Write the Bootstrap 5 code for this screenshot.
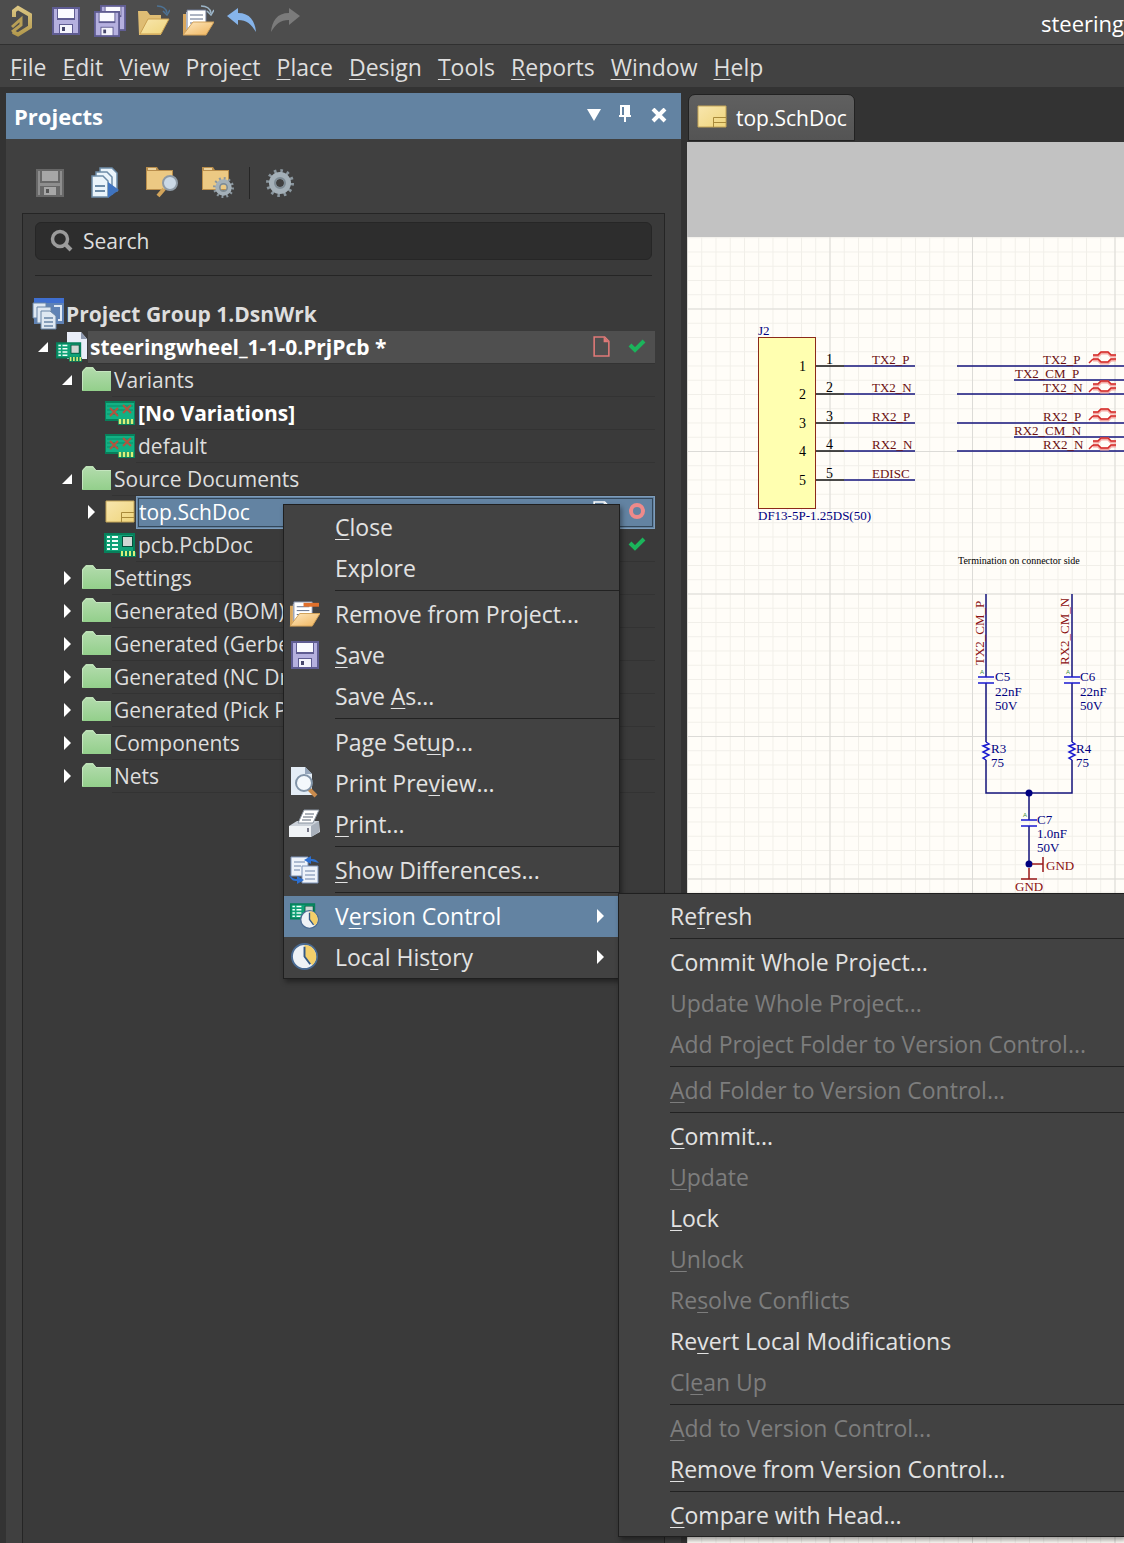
<!DOCTYPE html>
<html lang="en">
<head>
<meta charset="utf-8">
<meta name="viewport" content="width=device-width, initial-scale=1">
<title>steeringwheel_1-1-0.PrjPcb</title>
<link href="https://cdn.jsdelivr.net/npm/bootstrap@5.3.0/dist/css/bootstrap.min.css" rel="stylesheet">
<style>
:root{--ui:#424242;--line:#252525;--accent:#6383a2;--txt:#dedede}
body{font-family:"Open Sans","Noto Sans",sans-serif;font-size:21px;line-height:32px;color:var(--txt);background:#333;overflow:hidden}
u{text-decoration-thickness:1px;text-underline-offset:3px}
svg{display:block;flex:none}
button{color:inherit}
.icon-btn{background:none;border:0;padding:0}
.titlebar{height:45px;background:#4d4d4d;border-bottom:1px solid #303030;padding:5px 0 0 6px;gap:12px}
.doc-title{color:#fff;width:83px;line-height:36px;font-size:22px;overflow:hidden;white-space:nowrap}
.menubar{height:42px;background:var(--ui);padding-left:10px;gap:16px;font-size:23px;line-height:45px}
.menubar a{color:var(--txt);padding:0;line-height:44px}
.workspace{padding-top:6px;gap:6px}
.projects{width:675px;margin-left:6px;background:#404040;flex:none}
.panel-head{height:46px;background:var(--accent);color:#fff;padding:0 12px 0 8px}
.panel-head h1{font-size:22px;font-weight:700;line-height:46px;margin:0}
.head-tools{gap:16px}
.panel-tools{padding:28px 0 0 28px;height:74px;gap:24px}
.tool-sep{width:1px;height:32px;background:var(--line);margin:0 -9px}
.frame-box{margin:0 16px;border:1px solid var(--line);border-bottom:0;background:#3a3a3a;padding:8px 9px 0}
.search-box{margin:0 3px;height:38px;background:#2d2d2d;border:1px solid #262626;border-radius:6px;padding:0 14px;gap:9px}
.search-box input{background:none;border:0;outline:0;color:var(--txt);padding:0;font-size:21px;line-height:32px}
.search-box input::placeholder{color:var(--txt);opacity:1}
.rule-line{height:1px;background:var(--line);margin:15px 3px 22px}
.tree-row{height:33px}
.tree-row svg{margin-bottom:2px}
.twist{width:20px;flex:none;padding-left:1px}
.twist svg{width:12px;height:14px}
.lv1{padding-left:4px}.lv2{padding-left:28px}.lv3{padding-left:52px}
.node-name{height:33px;line-height:32px;padding-left:2px;border-bottom:1px solid #333;white-space:nowrap}
.is-bold{font-weight:700}
.is-project{background:#4f4f4f;color:#fff}
.is-picked{background:var(--accent);border:1px solid #7d9cba;outline:1px solid #33475a;outline-offset:-3px;color:#fff;line-height:29px;padding-bottom:1px}
.state{width:36px;display:flex;justify-content:center}
.state-new{color:#e07a78}
.is-picked .state:last-child{margin-right:-1px}
.tabs{height:49px;padding:1px 0 0 1px}
.doc-tab{height:47px;width:167px;background:linear-gradient(#606060,#545454);border:1px solid #222;border-radius:7px 7px 0 0;color:#fff;gap:9px;padding-left:8px;font-size:21px}
.doc-tab svg{margin-bottom:2px}
.sheet text{font-family:"Liberation Serif",serif;font-size:13px;fill:#000080}
.sheet .net{fill:#6b0f10}.sheet .gnd{fill:#8b1010}.sheet .pin{fill:#000;font-size:14px}.sheet .memo{fill:#000;font-size:10px}.sheet .tiny{fill:#3d8b3d;font-family:"Liberation Sans",sans-serif;font-size:6px}
.sheet .wire{stroke:#15157c;stroke-width:1.5;fill:none}.sheet .part{stroke:#1a1ad0;stroke-width:1.5;fill:none}.sheet .pow{stroke:#9b1a1a;stroke-width:1.5;fill:none}
.menu-pop{background:var(--ui);border:1px solid #1f1f1f;border-radius:0;padding:2px 0 0;min-width:0;font-size:23px;box-shadow:2px 3px 5px #0006}
.menu-pop .dropdown-item{height:41px;line-height:38px;padding:0 13px 2px 5px;color:#e2e2e2;display:flex;align-items:center;background:none;white-space:nowrap}
.menu-pop .dropdown-item:disabled{color:#7d7d7d}
.menu-pop .dropdown-item.active{background:var(--accent);color:#fff}
.menu-pop .pic{width:46px;flex:none}
.menu-pop hr{margin:1px 0 3px 51px;border:0;height:1px;background:#222;opacity:1}
.menu-ctx{left:283px;top:504px;width:337px}
.menu-sub{left:618px;top:893px;right:0;border-right:0}
</style>
</head>
<body>
<svg width="0" height="0" class="position-absolute" aria-hidden="true">
<defs>
<linearGradient id="gFold" x2="0" y2="1"><stop stop-color="#b4dcae"/><stop offset="1" stop-color="#93cf8b"/></linearGradient>
<linearGradient id="gYel" x2="1" y2="1"><stop stop-color="#f8e6ae"/><stop offset="1" stop-color="#efd57c"/></linearGradient>
<linearGradient id="gOra" x2="1" y2="1"><stop stop-color="#fde8c0"/><stop offset="1" stop-color="#efb45c"/></linearGradient>
<linearGradient id="gGold" gradientUnits="userSpaceOnUse" x1="0" y1="2" x2="0" y2="32"><stop stop-color="#dcc683"/><stop offset="1" stop-color="#b09649"/></linearGradient>
<symbol id="folder" viewBox="0 0 32 27"><path d="M2 6V25H31V5H16L13 1H6L3 4Z" fill="url(#gFold)"/><path d="M2.500 24V6L6 2H13L16 5.500H31" fill="none" stroke="#c5e6bf"/></symbol>
<symbol id="schdoc" viewBox="0 0 30 24"><path d="M1 1H29V22H1Z" fill="url(#gYel)" stroke="#c4a558"/><path d="M29 12.500H16.500V22M16 17.500H29" fill="none" stroke="#a98a3a"/></symbol>
<symbol id="board" viewBox="0 0 32 24"><path d="M0 0H31V19H32V24H16V20H0Z" fill="#07805b"/><path d="M2 2H29V18H2Z" fill="#10a277"/><path d="M3 4h3M3 8h3M3 12h3M3 16h3M8 4h6M8 8h6M8 12h6M8 16h6" stroke="#f2fff9" stroke-width="2"/><path d="M18 3H29V14H18Z" fill="#064f3c"/><path d="M19 4H28V13H19Z" fill="#cfd6d3"/><path d="M18 18v5M22 18v5M26 18v5M30 18v5" stroke="#d8f07a" stroke-width="2"/></symbol>
<symbol id="variant" viewBox="0 0 32 24"><path d="M1 0H31V24H14V20H1Z" fill="#07805b"/><path d="M2 2H30V18H2Z" fill="#12b184"/><path d="M3 5H29M3 9H29M3 13H14" stroke="#0a8d69"/><path d="M6 7l8 8M14 7l-8 8M19 4l8 8M27 4l-8 8" stroke="#b5533f" stroke-width="2"/><path d="M16 18v5M20 18v5M24 18v5M28 18v5" stroke="#d8f07a" stroke-width="2.500"/></symbol>
<symbol id="disk" viewBox="0 0 28 28"><path d="M0 0H28V28H0Z" fill="#5f5c92"/><path d="M2 2H26V26H2Z" fill="#b5b0df"/><path d="M5 1H23V13H5Z" fill="#5f5c92"/><path d="M6 2H22V11H6Z" fill="#fafaff"/><path d="M7 17H21V27H7Z" fill="#5f5c92"/><path d="M8 18H20V26H8Z" fill="#f4f4fc"/><path d="M10 20H13V24H10Z" fill="#47476d"/></symbol>
<symbol id="diskgray" viewBox="0 0 28 28"><path d="M0 0H28V28H0Z" fill="#686868"/><path d="M2 2H4V26H2ZM24 2H26V26H24ZM4 14H24V17H4Z" fill="#8e8e8e"/><path d="M6 2H22V12H6Z" fill="#a7a7a7"/><path d="M8 18H20V26H8Z" fill="#a7a7a7"/><path d="M10 20H13V24H10Z" fill="#555"/></symbol>
<symbol id="openf" viewBox="0 0 32 32"><path d="M0 6H9L12 10H23V30H1Z" fill="#dfbd74"/><path d="M2 29L10 14H31L23 29Z" fill="url(#gYel)" stroke="#c99f50"/></symbol>
<symbol id="opendoc" viewBox="0 0 32 32"><path d="M1 9H7V30H1Z" fill="#d9a75d"/><path d="M4 7H10V28H4Z" fill="#f2f2f2"/><path d="M5 5H24V26H5Z" fill="#fff" stroke="#6e7b96"/><path d="M8 10H21M8 14H21M8 18H18" stroke="#5d6a86"/><path d="M1 30L11 17H32L24 30Z" fill="url(#gOra)" stroke="#d0a058"/></symbol>
<symbol id="curl" viewBox="0 0 14 11"><path d="M1 1C7 1 10 3 11 8" fill="none" stroke="currentColor" stroke-width="1.500"/><path d="M7 6L11 10L14 5" fill="none" stroke="currentColor" stroke-width="1.500"/></symbol>
<symbol id="undo" viewBox="0 0 32 26"><path d="M1 9L12 1V6C24 6 29 14 30 25C25 17 21 13 12 13V18Z" fill="currentColor"/></symbol>
<symbol id="gear" viewBox="0 0 28 28"><circle cx="14" cy="14" r="12" fill="none" stroke="#8b979f" stroke-width="4" stroke-dasharray="2.500 3.780"/><circle cx="14" cy="14" r="7.500" fill="none" stroke="#a4b0b8" stroke-width="7"/><circle cx="14" cy="14" r="5" fill="none" stroke="#7d8a93" stroke-width="2"/></symbol>
<symbol id="tanfold" viewBox="0 0 27 23"><path d="M0 0H11L13 3H27V23H0Z" fill="#b98e4c"/><path d="M1 4H26V22H1Z" fill="#ecc983"/><path d="M2 1H10V3H2Z" fill="#ecd3a0"/></symbol>
<symbol id="clock" viewBox="0 0 28 28"><circle cx="14" cy="14" r="13" fill="#eef2f6" stroke="#4a6b93" stroke-width="2"/><path d="M14 14V2A12 12 0 0 1 22 23Z" fill="#f3cf6a"/><path d="M14 4V14L20 22" fill="none" stroke="#355a86" stroke-width="2"/></symbol>
<symbol id="down" viewBox="0 0 12 14"><path d="M11 2V12H1Z" fill="#fff"/></symbol>
<symbol id="right" viewBox="0 0 12 14"><path d="M3 0L10 7L3 14Z" fill="#fff"/></symbol>
<symbol id="tick" viewBox="0 0 18 14"><path d="M2 6L7 11L16 2" fill="none" stroke="#1bb45b" stroke-width="4"/></symbol>
<symbol id="page" viewBox="0 0 16 20"><path d="M1 1H11L15 5V19H1Z" fill="none" stroke="currentColor" stroke-width="1.500"/><path d="M10 1V6H15" fill="currentColor"/></symbol>
<symbol id="pair" viewBox="0 0 30 14"><path d="M5 5H10L13 2H20L23 5H28M5 9H10L13 12H20L23 9H28" fill="none" stroke="#f3a9a4" stroke-width="3"/><path d="M1 12L5 8M5 4H10L13 1H20L23 4H28M5 8H10L13 11H20L23 8H28" fill="none" stroke="#d42a27" stroke-width="1.500"/></symbol>
</defs>
</svg>

<div class="min-vh-100 d-flex flex-column">
<header>
  <div class="titlebar d-flex align-items-start">
    <svg width="32" height="33" viewBox="0 0 32 33"><path d="M8 12V6L12 3L24 10V22L12 29.500L7 27" fill="none" stroke="url(#gGold)" stroke-width="4"/><path d="M6 22L15 14V20L6 27" fill="none" stroke="#b89f56" stroke-width="3"/></svg>
    <button class="icon-btn" aria-label="Save"><svg width="32" height="32" viewBox="0 0 32 32"><use href="#disk" x="2" y="2" width="28" height="28"/></svg></button>
    <button class="icon-btn" aria-label="Save all"><svg width="32" height="32" viewBox="0 0 32 32"><use href="#disk" x="6" y="0" width="26" height="26"/><use href="#disk" x="0" y="6" width="26" height="26"/></svg></button>
    <button class="icon-btn" aria-label="Open"><svg width="32" height="32" viewBox="0 0 32 32"><use href="#openf" width="32" height="32"/><use href="#curl" x="18" y="0" width="14" height="11" color="#4d7294"/></svg></button>
    <button class="icon-btn" aria-label="Open document"><svg width="32" height="32" viewBox="0 0 32 32"><use href="#opendoc" width="32" height="32"/><use href="#curl" x="18" y="0" width="14" height="11" color="#9cb5c8"/></svg></button>
    <button class="icon-btn" aria-label="Undo"><svg width="32" height="29" viewBox="0 -2 32 29" color="#86b4ea"><use href="#undo" width="32" height="26"/></svg></button>
    <button class="icon-btn" aria-label="Redo"><svg width="32" height="29" viewBox="0 -2 32 29" color="#7b7b7b"><use href="#undo" width="32" height="26" transform="matrix(-1 0 0 1 31 0)"/></svg></button>
    <div class="doc-title ms-auto">steering</div>
  </div>
  <nav class="menubar d-flex">
    <a class="nav-link" href="#"><u>F</u>ile</a><a class="nav-link" href="#"><u>E</u>dit</a><a class="nav-link" href="#"><u>V</u>iew</a><a class="nav-link" href="#">Proje<u>c</u>t</a><a class="nav-link" href="#"><u>P</u>lace</a><a class="nav-link" href="#"><u>D</u>esign</a><a class="nav-link" href="#"><u>T</u>ools</a><a class="nav-link" href="#"><u>R</u>eports</a><a class="nav-link" href="#"><u>W</u>indow</a><a class="nav-link" href="#"><u>H</u>elp</a>
  </nav>
</header>

<main class="workspace d-flex flex-grow-1">
  <section class="projects d-flex flex-column">
    <div class="panel-head d-flex align-items-center">
      <h1 class="me-auto">Projects</h1>
      <div class="head-tools d-flex align-items-center">
        <button class="icon-btn" aria-label="Panel menu"><svg width="14" height="18" viewBox="0 0 14 18"><path d="M0 2H14L7 14Z" fill="#fff"/></svg></button>
        <button class="icon-btn" aria-label="Pin"><svg width="16" height="22" viewBox="0 0 16 22"><path d="M3 0H13V10H14V12H9V17H7V12H2V10H3Z" fill="#fff"/><path d="M5 2H7V10H5Z" fill="#6383a2"/></svg></button>
        <button class="icon-btn" aria-label="Close panel"><svg width="20" height="16" viewBox="0 0 20 16"><path d="M4 1L16 13M16 1L4 13" stroke="#fff" stroke-width="4"/></svg></button>
      </div>
    </div>
    <div class="panel-tools d-flex align-items-start">
      <button class="icon-btn" aria-label="Save project"><svg width="32" height="32" viewBox="0 0 32 32"><use href="#diskgray" x="2" y="2" width="28" height="28"/></svg></button>
      <button class="icon-btn" aria-label="Compile"><svg width="32" height="32" viewBox="0 0 32 32"><g fill="#eaf4fb" stroke="#6d8ca8" stroke-width="1.500"><path d="M10 1H22L27 6V24H10Z"/><path d="M6 5H17L22 10V27H6Z"/><path d="M2 9H13L18 14V30H2Z"/></g><path d="M5 19H15M5 24H15" stroke="#6d8ca8" stroke-width="2"/><path d="M18 15L29 23L18 31Z" fill="#3f74c0"/></svg></button>
      <button class="icon-btn" aria-label="Find in project"><svg width="32" height="32" viewBox="0 0 32 32"><use href="#tanfold" width="27" height="23"/><path d="M12 29L18 22" stroke="#d2a45a" stroke-width="4"/><circle cx="24" cy="16" r="7" fill="#cbd9e6" stroke="#8e9aa5" stroke-width="2"/></svg></button>
      <button class="icon-btn" aria-label="Project options"><svg width="32" height="32" viewBox="0 0 32 32"><use href="#tanfold" width="27" height="23"/><use href="#gear" x="11" y="10" width="21" height="21"/></svg></button>
      <div class="tool-sep"></div>
      <button class="icon-btn" aria-label="Settings"><svg width="32" height="32" viewBox="0 0 32 32"><use href="#gear" x="1" y="2" width="28" height="28"/></svg></button>
    </div>
    <div class="frame-box flex-grow-1">
      <label class="search-box d-flex align-items-center">
        <svg width="24" height="24" viewBox="0 0 24 24"><circle cx="10" cy="10" r="7.500" fill="none" stroke="#9b9b9b" stroke-width="3.500"/><path d="M15 15L21 21" stroke="#9b9b9b" stroke-width="4"/></svg>
        <input class="flex-grow-1" type="search" placeholder="Search" aria-label="Search">
      </label>
      <div class="rule-line"></div>
      <ul class="list-unstyled m-0">
        <li class="tree-row d-flex align-items-center">
          <svg width="32" height="32" viewBox="0 0 32 32"><path d="M2 0H32V26H2Z" fill="#5f82b5"/><path d="M2 0H32V5H2Z" fill="#3f6fd0"/><g fill="#dfe8f2" stroke="#6884a6"><path d="M1 5H14V20H1Z"/><path d="M5 9H19V25H5Z"/><path d="M9 13H18L24 18V31H9Z"/></g><path d="M12 20H21M12 24H21M12 28H21" stroke="#6884a6" stroke-width="1.500"/><path d="M22 8H29V22H26" fill="none" stroke="#dfe8f2" stroke-width="2"/></svg>
          <span class="node-name is-bold border-0">Project Group 1.DsnWrk</span></li>
        <li class="tree-row d-flex align-items-center lv1"><span class="twist"><svg><use href="#down"/></svg></span>
          <svg width="32" height="32" viewBox="0 0 32 32"><path d="M11 1H25L31 8V28H11Z" fill="#e9eef8"/><path d="M25 1V8H31Z" fill="#8d98ae"/><use href="#board" x="0" y="11" width="26" height="20"/></svg>
          <span class="node-name is-bold is-project d-flex align-items-center flex-grow-1"><span class="me-auto">steeringwheel_1-1-0.PrjPcb *</span><span class="state state-new"><svg width="17" height="21"><use href="#page"/></svg></span><span class="state"><svg width="18" height="14"><use href="#tick"/></svg></span></span></li>
        <li class="tree-row d-flex align-items-center lv2"><span class="twist"><svg><use href="#down"/></svg></span><svg width="32" height="27"><use href="#folder"/></svg><span class="node-name flex-grow-1">Variants</span></li>
        <li class="tree-row d-flex align-items-center lv3"><span class="twist"></span><svg width="32" height="24"><use href="#variant"/></svg><span class="node-name is-bold text-white flex-grow-1">[No Variations]</span></li>
        <li class="tree-row d-flex align-items-center lv3"><span class="twist"></span><svg width="32" height="24"><use href="#variant"/></svg><span class="node-name flex-grow-1">default</span></li>
        <li class="tree-row d-flex align-items-center lv2"><span class="twist"><svg><use href="#down"/></svg></span><svg width="32" height="27"><use href="#folder"/></svg><span class="node-name flex-grow-1">Source Documents</span></li>
        <li class="tree-row d-flex align-items-center lv3"><span class="twist"><svg><use href="#right"/></svg></span><svg width="32" height="24"><use href="#schdoc"/></svg><span class="node-name is-picked d-flex align-items-center flex-grow-1"><span class="me-auto">top.SchDoc</span><span class="state"><svg width="17" height="21"><use href="#page"/></svg></span><span class="state"><svg width="18" height="18"><circle cx="9" cy="9" r="6" fill="none" stroke="#ee8a8a" stroke-width="4"/></svg></span></span></li>
        <li class="tree-row d-flex align-items-center lv3"><span class="twist"></span><svg width="32" height="24"><use href="#board"/></svg><span class="node-name d-flex align-items-center flex-grow-1"><span class="me-auto">pcb.PcbDoc</span><span class="state"><svg width="18" height="14"><use href="#tick"/></svg></span></span></li>
        <li class="tree-row d-flex align-items-center lv2"><span class="twist"><svg><use href="#right"/></svg></span><svg width="32" height="27"><use href="#folder"/></svg><span class="node-name flex-grow-1">Settings</span></li>
        <li class="tree-row d-flex align-items-center lv2"><span class="twist"><svg><use href="#right"/></svg></span><svg width="32" height="27"><use href="#folder"/></svg><span class="node-name flex-grow-1">Generated (BOM)</span></li>
        <li class="tree-row d-flex align-items-center lv2"><span class="twist"><svg><use href="#right"/></svg></span><svg width="32" height="27"><use href="#folder"/></svg><span class="node-name flex-grow-1">Generated (Gerber)</span></li>
        <li class="tree-row d-flex align-items-center lv2"><span class="twist"><svg><use href="#right"/></svg></span><svg width="32" height="27"><use href="#folder"/></svg><span class="node-name flex-grow-1">Generated (NC Drill)</span></li>
        <li class="tree-row d-flex align-items-center lv2"><span class="twist"><svg><use href="#right"/></svg></span><svg width="32" height="27"><use href="#folder"/></svg><span class="node-name flex-grow-1">Generated (Pick Place)</span></li>
        <li class="tree-row d-flex align-items-center lv2"><span class="twist"><svg><use href="#right"/></svg></span><svg width="32" height="27"><use href="#folder"/></svg><span class="node-name flex-grow-1">Components</span></li>
        <li class="tree-row d-flex align-items-center lv2"><span class="twist"><svg><use href="#right"/></svg></span><svg width="32" height="27"><use href="#folder"/></svg><span class="node-name flex-grow-1">Nets</span></li>
      </ul>
    </div>
  </section>

  <section class="d-flex flex-column flex-grow-1 overflow-hidden">
    <div class="tabs"><button class="doc-tab d-flex align-items-center"><svg width="30" height="24"><use href="#schdoc"/></svg><span>top.SchDoc</span></button></div>
    <svg class="sheet w-100 flex-grow-1" role="img" aria-label="Schematic sheet">
      <defs>
        <pattern id="fine" width="14.250" height="14.250" patternUnits="userSpaceOnUse" y="309"><path d="M0.500 0V15M0 0.500H15" stroke="#f1efe9" fill="none"/></pattern>
        <pattern id="coarse" width="142.500" height="142.500" patternUnits="userSpaceOnUse" y="309"><path d="M0.500 0V143M0 0.500H143" stroke="#dcdbd7" fill="none"/></pattern>
      </defs>
      <rect width="100%" height="100%" fill="#fffdf8"/><rect width="100%" height="100%" fill="url(#fine)"/><rect width="100%" height="100%" fill="url(#coarse)"/>
      <rect width="100%" height="95" fill="#c2c2c2"/>
      <g transform="translate(-687 -142)">
        <rect x="758.500" y="337.500" width="57" height="171" fill="#ffffb0" stroke="#8b2a1a"/>
        <text x="758" y="335">J2</text><text x="758" y="520">DF13-5P-1.25DS(50)</text>
        <path class="wire" d="M844 366H915M844 394H915M844 423H915M844 451H915M844 480H915"/>
        <path d="M816 366H844M816 394H844M816 423H844M816 451H844M816 480H844" stroke="#111" stroke-width="1.500"/>
        <text class="pin" x="799" y="371">1</text><text class="pin" x="799" y="399">2</text><text class="pin" x="799" y="428">3</text><text class="pin" x="799" y="456">4</text><text class="pin" x="799" y="485">5</text>
        <text class="pin" x="826" y="364">1</text><text class="pin" x="826" y="392">2</text><text class="pin" x="826" y="421">3</text><text class="pin" x="826" y="449">4</text><text class="pin" x="826" y="478">5</text>
        <text class="net" x="872" y="364">TX2_P</text><text class="net" x="872" y="392">TX2_N</text><text class="net" x="872" y="421">RX2_P</text><text class="net" x="872" y="449">RX2_N</text><text class="net" x="872" y="478">EDISC</text>
        <path class="wire" d="M957 366H1900M1014 380H1900M957 394H1900M957 423H1900M1014 437H1900M957 451H1900"/>
        <text class="net" x="1043" y="364">TX2_P</text><text class="net" x="1015" y="378">TX2_CM_P</text><text class="net" x="1043" y="392">TX2_N</text><text class="net" x="1043" y="421">RX2_P</text><text class="net" x="1014" y="435">RX2_CM_N</text><text class="net" x="1043" y="449">RX2_N</text>
        <use href="#pair" x="1088" y="351" width="30" height="14"/><use href="#pair" x="1088" y="380" width="30" height="14"/><use href="#pair" x="1088" y="408" width="30" height="14"/><use href="#pair" x="1088" y="437" width="30" height="14"/>
        <text class="memo" x="958" y="564">Termination on connector side</text>
        <path class="wire" d="M986 594V677M986 683V742M986 760V793H1072V760M1072 594V677M1072 683V742M1029 793V820M1029 826V864"/>
        <path class="part" d="M978 677H994M978 683H994M1064 677H1080M1064 683H1080M1021 820H1037M1021 826H1037"/>
        <path class="part" d="M986 742L989 744L983 746L989 749L983 752L989 755L983 758L986 760M1072 742L1075 744L1069 746L1075 749L1069 752L1075 755L1069 758L1072 760"/>
        <circle cx="1029" cy="793" r="3.500" fill="#000080"/><circle cx="1029" cy="864" r="3.500" fill="#000080"/>
        <path class="pow" d="M1032 864H1043M1043 857V872M1029 868V879M1021 879H1037"/>
        <text class="gnd" transform="translate(984 665) rotate(-90)">TX2_CM_P</text><text class="gnd" transform="translate(1069 665) rotate(-90)">RX2_CM_N</text>
        <text class="tiny" x="980" y="674">A</text><text class="tiny" x="1066" y="674">A</text><text class="tiny" x="1023" y="817">A</text>
        <text x="995" y="681">C5</text><text x="995" y="696">22nF</text><text x="995" y="710">50V</text><text x="991" y="753">R3</text><text x="991" y="767">75</text>
        <text x="1080" y="681">C6</text><text x="1080" y="696">22nF</text><text x="1080" y="710">50V</text><text x="1076" y="753">R4</text><text x="1076" y="767">75</text>
        <text x="1037" y="824">C7</text><text x="1037" y="838">1.0nF</text><text x="1037" y="852">50V</text>
        <text class="gnd" x="1046" y="870">GND</text><text class="gnd" x="1015" y="891">GND</text>
      </g>
    </svg>
  </section>
</main>
</div>

<ul class="dropdown-menu show menu-pop menu-ctx">
  <li><button class="dropdown-item"><span class="pic"></span><span><u>C</u>lose</span></button></li>
  <li><button class="dropdown-item"><span class="pic"></span><span>Explore</span></button></li>
  <li><hr></li>
  <li><button class="dropdown-item"><span class="pic"><svg width="31" height="31" viewBox="0 0 32 32"><use href="#opendoc" y="-1" width="32" height="32"/><path d="M15 5H31V9H15Z" fill="#e0702c"/></svg></span><span>Remove from Project...</span></button></li>
  <li><button class="dropdown-item"><span class="pic"><svg width="31" height="28" viewBox="-2 0 31 28"><use href="#disk" width="28" height="28"/></svg></span><span><u>S</u>ave</span></button></li>
  <li><button class="dropdown-item"><span class="pic"></span><span>Save <u>A</u>s...</span></button></li>
  <li><hr></li>
  <li><button class="dropdown-item"><span class="pic"></span><span>Page Set<u>u</u>p...</span></button></li>
  <li><button class="dropdown-item"><span class="pic"><svg width="31" height="31" viewBox="0 0 31 31"><path d="M2 0H16L23 7V28H2Z" fill="#e4edf6"/><path d="M16 0V7H23Z" fill="#94a5ba"/><path d="M20 22L27 29" stroke="#c98b4d" stroke-width="4"/><circle cx="15" cy="16" r="8" fill="#f3f8fc" stroke="#8194a8" stroke-width="2"/></svg></span><span>Print Pre<u>v</u>iew...</span></button></li>
  <li><button class="dropdown-item"><span class="pic"><svg width="31" height="30" viewBox="0 0 31 30"><path d="M0 17L8 12H30L31 23L22 28H0Z" fill="#ccd2da"/><path d="M0 17H22V28H0Z" fill="#f0f3f6"/><path d="M22 17L30 12V23L22 28Z" fill="#a9b1bc"/><path d="M9 14L15 1H30L24 14Z" fill="#fff" stroke="#8993a0"/><path d="M16 5H25M14 8H24M13 11H22" stroke="#5b6777"/><path d="M18 19H20V23H18Z" fill="#778"/></svg></span><span><u>P</u>rint...</span></button></li>
  <li><hr></li>
  <li><button class="dropdown-item"><span class="pic"><svg width="31" height="30" viewBox="0 0 31 30"><path d="M2 2H19V21H2Z" fill="#eef3fa" stroke="#7c93b8"/><path d="M5 7H16M5 11H12M5 15H11" stroke="#6d83a8"/><path d="M13 11H29V28H13Z" fill="#eef3fa" stroke="#7c93b8"/><path d="M16 16H26M16 20H26M16 24H26" stroke="#6d83a8"/><path d="M30 8C27 4 25 4 22 4V1L15 5L22 9V6M0 20C4 24 6 24 8 24V21L15 25L8 29V26C4 26 2 25 0 20Z" fill="#2c6fd0"/></svg></span><span><u>S</u>how Differences...</span></button></li>
  <li><hr></li>
  <li><button class="dropdown-item active"><span class="pic"><svg width="31" height="30" viewBox="0 0 31 30"><use href="#board" y="2" x="1" width="26" height="20"/><use href="#clock" x="11" y="9" width="19" height="19"/></svg></span><span class="me-auto">V<u>e</u>rsion Control</span><svg width="12" height="14"><use href="#right"/></svg></button></li>
  <li><button class="dropdown-item"><span class="pic"><svg width="31" height="30" viewBox="0 0 31 30"><use href="#clock" x="2" y="1" width="27" height="27"/></svg></span><span class="me-auto">Local His<u>t</u>ory</span><svg width="12" height="14"><use href="#right"/></svg></button></li>
</ul>

<ul class="dropdown-menu show menu-pop menu-sub">
  <li><button class="dropdown-item"><span class="pic"></span><span>Re<u>f</u>resh</span></button></li>
  <li><hr></li>
  <li><button class="dropdown-item"><span class="pic"></span><span>Commit Whole Project...</span></button></li>
  <li><button class="dropdown-item" disabled><span class="pic"></span><span>Update Whole Project...</span></button></li>
  <li><button class="dropdown-item" disabled><span class="pic"></span><span>Add Project Folder to Version Control...</span></button></li>
  <li><hr></li>
  <li><button class="dropdown-item" disabled><span class="pic"></span><span><u>A</u>dd Folder to Version Control...</span></button></li>
  <li><hr></li>
  <li><button class="dropdown-item"><span class="pic"></span><span><u>C</u>ommit...</span></button></li>
  <li><button class="dropdown-item" disabled><span class="pic"></span><span><u>U</u>pdate</span></button></li>
  <li><button class="dropdown-item"><span class="pic"></span><span><u>L</u>ock</span></button></li>
  <li><button class="dropdown-item" disabled><span class="pic"></span><span><u>U</u>nlock</span></button></li>
  <li><button class="dropdown-item" disabled><span class="pic"></span><span>Re<u>s</u>olve Conflicts</span></button></li>
  <li><button class="dropdown-item"><span class="pic"></span><span>Re<u>v</u>ert Local Modifications</span></button></li>
  <li><button class="dropdown-item" disabled><span class="pic"></span><span>Cl<u>e</u>an Up</span></button></li>
  <li><hr></li>
  <li><button class="dropdown-item" disabled><span class="pic"></span><span><u>A</u>dd to Version Control...</span></button></li>
  <li><button class="dropdown-item"><span class="pic"></span><span><u>R</u>emove from Version Control...</span></button></li>
  <li><hr></li>
  <li><button class="dropdown-item"><span class="pic"></span><span><u>C</u>ompare with Head...</span></button></li>
</ul>
<script src="https://cdn.jsdelivr.net/npm/bootstrap@5.3.0/dist/js/bootstrap.bundle.min.js"></script>
</body>
</html>
